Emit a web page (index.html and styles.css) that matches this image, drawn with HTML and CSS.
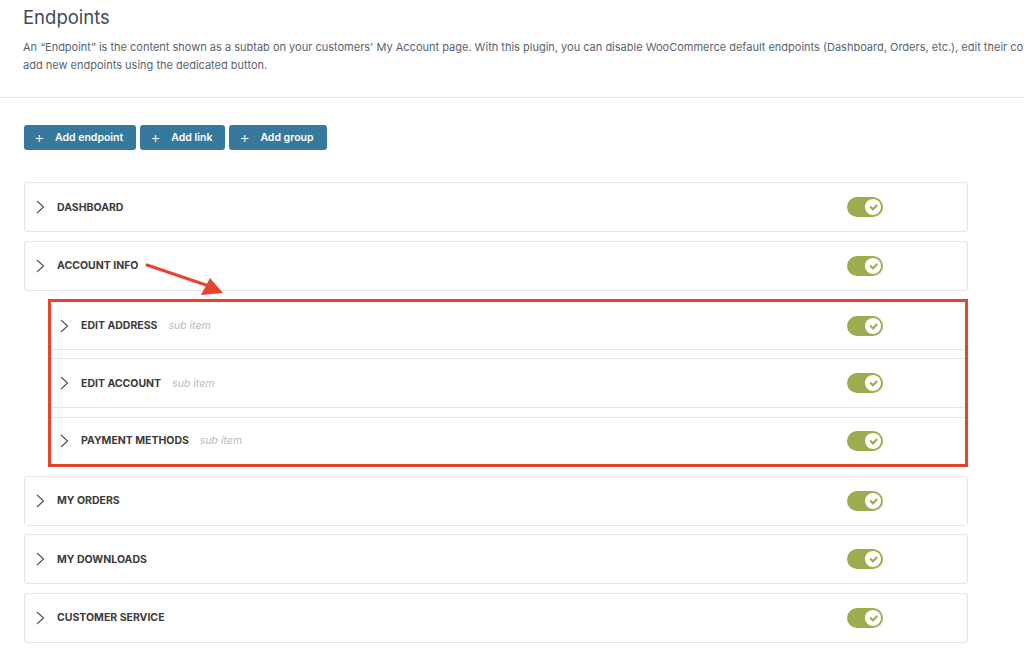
FILE: index.html
```html
<!DOCTYPE html>
<html lang="en">
<head>
    <meta charset="UTF-8">
    <meta name="viewport" content="width=device-width, initial-scale=1.0">
    <title>Endpoints</title>
    <link rel="stylesheet" href="styles.css">
</head>
<body>
    <div class="page-head">
        <h1>Endpoints</h1>
        <p class="intro">An “Endpoint” is the content shown as a subtab on your customers' My Account page. With this plugin, you can disable WooCommerce default endpoints (Dashboard, Orders, etc.), edit their content and<br>add new endpoints using the dedicated button.</p>
    </div>

    <div class="content">
        <div class="toolbar">
            <button class="btn"><span class="plus">+</span>Add endpoint</button>
            <button class="btn"><span class="plus">+</span>Add link</button>
            <button class="btn"><span class="plus">+</span>Add group</button>
        </div>

        <div class="endpoints">
            <div class="item">
                <svg class="chevron" width="9" height="14" viewBox="0 0 9 14"><polyline points="1,1 7.5,7 1,13" fill="none" stroke="#555" stroke-width="1.2"/></svg>
                <span class="label">Dashboard</span>
                <span class="toggle"><span class="knob"></span></span>
            </div>
            <div class="item">
                <svg class="chevron" width="9" height="14" viewBox="0 0 9 14"><polyline points="1,1 7.5,7 1,13" fill="none" stroke="#555" stroke-width="1.2"/></svg>
                <span class="label">Account info</span>
                <span class="toggle"><span class="knob"></span></span>
            </div>

            <div class="sub-group">
                <div class="item sub">
                    <svg class="chevron" width="9" height="14" viewBox="0 0 9 14"><polyline points="1,1 7.5,7 1,13" fill="none" stroke="#555" stroke-width="1.2"/></svg>
                    <span class="label">Edit address</span>
                    <span class="hint">sub item</span>
                    <span class="toggle"><span class="knob"></span></span>
                </div>
                <div class="item sub">
                    <svg class="chevron" width="9" height="14" viewBox="0 0 9 14"><polyline points="1,1 7.5,7 1,13" fill="none" stroke="#555" stroke-width="1.2"/></svg>
                    <span class="label">Edit account</span>
                    <span class="hint">sub item</span>
                    <span class="toggle"><span class="knob"></span></span>
                </div>
                <div class="item sub">
                    <svg class="chevron" width="9" height="14" viewBox="0 0 9 14"><polyline points="1,1 7.5,7 1,13" fill="none" stroke="#555" stroke-width="1.2"/></svg>
                    <span class="label">Payment methods</span>
                    <span class="hint">sub item</span>
                    <span class="toggle"><span class="knob"></span></span>
                </div>
            </div>

            <div class="item">
                <svg class="chevron" width="9" height="14" viewBox="0 0 9 14"><polyline points="1,1 7.5,7 1,13" fill="none" stroke="#555" stroke-width="1.2"/></svg>
                <span class="label">My orders</span>
                <span class="toggle"><span class="knob"></span></span>
            </div>
            <div class="item">
                <svg class="chevron" width="9" height="14" viewBox="0 0 9 14"><polyline points="1,1 7.5,7 1,13" fill="none" stroke="#555" stroke-width="1.2"/></svg>
                <span class="label">My downloads</span>
                <span class="toggle"><span class="knob"></span></span>
            </div>
            <div class="item">
                <svg class="chevron" width="9" height="14" viewBox="0 0 9 14"><polyline points="1,1 7.5,7 1,13" fill="none" stroke="#555" stroke-width="1.2"/></svg>
                <span class="label">Customer service</span>
                <span class="toggle"><span class="knob"></span></span>
            </div>

            <!-- annotation arrow pointing at the sub items -->
            <svg class="arrow" width="90" height="40" viewBox="0 0 90 40">
                <line x1="2" y1="3" x2="64" y2="24" stroke="#e8432d" stroke-width="3" stroke-linecap="round"/>
                <polygon points="78,31 56,33 65,16" fill="#e8432d"/>
            </svg>
        </div>
    </div>
</body>
</html>
```

FILE: styles.css
```css
html, body {
    margin: 0;
    background: #ffffff;
    overflow: hidden;
}
body {
    font-family: Inter, "Noto Sans", Arial, sans-serif;
    color: #3b3b3b;
}

/* header */
.page-head {
    padding: 5px 23px 0;
    height: 92px;
    border-bottom: 1px solid #e6e8eb;
}
.page-head h1 {
    margin: 0;
    font-size: 18.5px;
    line-height: 24px;
    font-weight: 400;
    color: #3f4a5a;
}
.intro {
    margin: 9px 0 0;
    font-size: 11px;
    line-height: 18px;
    color: #5a6270;
    white-space: nowrap;
}

.content {
    padding: 27px 56px 0 24px;
}

/* buttons */
.toolbar {
    display: flex;
    gap: 4px;
}
.btn {
    display: flex;
    align-items: center;
    height: 25px;
    padding: 0 13px 0 10px;
    background: #37799c;
    color: #ffffff;
    border: none;
    border-radius: 3px;
    font-family: inherit;
    font-size: 10.5px;
    font-weight: 600;
    cursor: pointer;
}
.btn .plus {
    font-size: 16px;
    font-weight: 300;
    width: 10px;
    margin-right: 11px;
    line-height: 1;
    position: relative;
    top: -1px;
}

/* endpoint list */
.endpoints {
    position: relative;
    margin-top: 32px;
    display: flex;
    flex-direction: column;
    gap: 8.6px;
}
.item {
    display: flex;
    align-items: center;
    height: 50px;
    box-sizing: border-box;
    padding-left: 11px;
    background: #ffffff;
    border: 1px solid #e4e4e4;
    border-radius: 3px;
}
.chevron {
    flex: none;
    margin-right: 12px;
}
.label {
    font-size: 10.5px;
    font-weight: 700;
    text-transform: uppercase;
    color: #3a3a3a;
}
.hint {
    margin-left: 11px;
    font-size: 10.5px;
    font-style: italic;
    color: #b8b8b8;
}

/* toggle */
.toggle {
    margin-left: auto;
    margin-right: 84px;
    width: 36px;
    height: 20px;
    border-radius: 10px;
    background: #9cad4f;
    position: relative;
}
.knob {
    position: absolute;
    right: 2px;
    top: 2px;
    width: 16px;
    height: 16px;
    border-radius: 50%;
    background: #ffffff;
}
.knob::after {
    content: "";
    position: absolute;
    left: 5px;
    top: 5px;
    width: 5px;
    height: 2.5px;
    border-left: 2px solid #9cad4f;
    border-bottom: 2px solid #9cad4f;
    transform: rotate(-45deg);
}

/* highlighted sub items */
.sub-group {
    margin: 0 0 0.4px 24px;
    border: 3px solid #e8432d;
    display: flex;
    flex-direction: column;
    gap: 8.3px;
}
.item.sub {
    height: 50px;
    border-radius: 0;
    border-left: none;
    border-right: none;
    padding-left: 9px;
}
.item.sub:first-child {
    height: 48px;
    border-top: none;
}
.item.sub:last-child {
    height: 47px;
    border-bottom: none;
}
.item.sub .toggle {
    margin-right: 82px;
}

.arrow {
    position: absolute;
    left: 121px;
    top: 80px;
}
```
